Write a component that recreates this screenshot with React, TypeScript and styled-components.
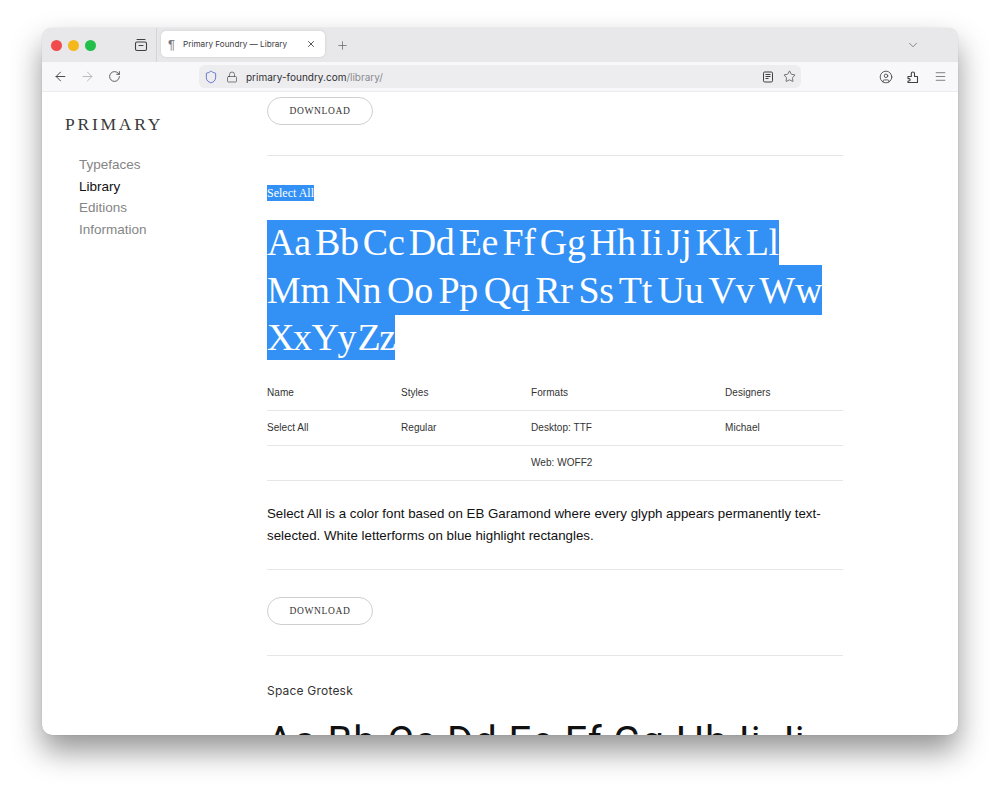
import styled, { createGlobalStyle } from "styled-components";
import { ArrowLeft, ArrowRight, ChevronDown, CircleUser, Lock, Menu, Plus, RotateCw, Shield, Star, X } from "lucide-react";

const GlobalStyle = createGlobalStyle`
  html, body {
    margin: 0;
    background: #ffffff;
  }
  body {
    font-family: "Liberation Sans", "Inter", sans-serif;
  }
`;

const Page = styled.div`
  box-sizing: border-box;
  width: 1000px;
  height: 790px;
  padding: 28px 42px 55px;
  overflow: hidden;
`;

const Window = styled.div`
  height: 100%;
  display: flex;
  flex-direction: column;
  border-radius: 10px;
  overflow: hidden;
  background: #ffffff;
  box-shadow: 0 16px 30px rgba(0, 0, 0, 0.42), 0 0 1px rgba(0, 0, 0, 0.3);
`;

const TabBar = styled.div`
  flex: none;
  height: 34px;
  display: flex;
  align-items: center;
  background: #e8e8ea;
  padding-left: 9px;
`;

const Lights = styled.div`
  display: flex;
  gap: 6px;
  width: 82px;
`;

const Light = styled.span<{ $color: string }>`
  width: 11px;
  height: 11px;
  border-radius: 50%;
  background: ${(p) => p.$color};
`;

const IconSlot = styled.span<{ $color?: string }>`
  flex: none;
  width: 16px;
  height: 16px;
  display: flex;
  align-items: center;
  justify-content: center;
  color: ${(p) => p.$color ?? "#3f3f44"};
`;

const Separator = styled.span`
  width: 1px;
  height: 34px;
  background: #d4d4d6;
  margin: 0 4px 0 7px;
`;

const Tab = styled.div`
  width: 164px;
  height: 26px;
  box-sizing: border-box;
  margin-top: -2px;
  padding: 0 9px 0 7px;
  display: flex;
  align-items: center;
  background: #ffffff;
  border-radius: 5px;
  box-shadow: 0 0 3px rgba(0, 0, 0, 0.12);
  font-family: "Inter", sans-serif;
  font-size: 8.2px;
  color: #3e3e42;
`;

const TabGlyph = styled.span`
  width: 15px;
  font-family: "Liberation Sans", sans-serif;
  font-size: 13px;
  color: #77777b;
`;

const TabTitle = styled.span`
  flex: 1;
`;

const NewTab = styled.span`
  margin-left: 11px;
  display: flex;
  color: #55555a;
`;

const TabSpacer = styled.div`
  flex: 1;
`;

const TabMenu = styled.span`
  display: flex;
  color: #66666b;
  margin-right: 38px;
`;

const Toolbar = styled.div`
  flex: none;
  height: 30px;
  box-sizing: border-box;
  display: flex;
  align-items: center;
  background: #f8f8fa;
  border-bottom: 1px solid #ececee;
  padding: 0 10px;
`;

const NavButtons = styled.div`
  display: flex;
  gap: 11px;
  width: 147px;
`;

const UrlBar = styled.div`
  width: 602px;
  height: 23px;
  box-sizing: border-box;
  display: flex;
  align-items: center;
  gap: 5px;
  padding: 0 4px;
  background: #ededf0;
  border-radius: 6px;
`;

const Url = styled.div`
  flex: 1;
  padding-left: 1px;
  font-family: "Inter", sans-serif;
  font-size: 10px;
  color: #2f2f33;
`;

const UrlPath = styled.span`
  color: #8a8a8f;
`;

const ToolbarEnd = styled.div`
  display: flex;
  gap: 11px;
  margin-left: 77px;
`;

const Body = styled.div`
  flex: 1;
  min-height: 0;
  display: flex;
  overflow: hidden;
`;

const Sidebar = styled.aside`
  flex: none;
  width: 225px;
  box-sizing: border-box;
  padding: 22px 0 0 23px;
`;

const Logo = styled.div`
  font-family: "Liberation Serif", serif;
  font-size: 17.5px;
  line-height: 20px;
  letter-spacing: 2.75px;
  color: #3a3a3a;
`;

const Nav = styled.nav`
  margin: 20px 0 0 14px;
  display: flex;
  flex-direction: column;
`;

const NavItem = styled.a<{ $active?: boolean }>`
  font-size: 13.5px;
  line-height: 21.7px;
  color: ${(p) => (p.$active ? "#111111" : "#858585")};
`;

const Main = styled.main`
  width: 576px;
  padding-top: 5px;
`;

const DownloadButton = styled.button`
  display: block;
  width: 106px;
  height: 28px;
  padding: 0;
  background: #ffffff;
  border: 1px solid #cfcfcf;
  border-radius: 14px;
  font-family: "Liberation Serif", serif;
  font-size: 9.5px;
  letter-spacing: 0.65px;
  color: #333333;
`;

const Rule = styled.hr<{ $top: number; $bottom: number }>`
  margin: ${(p) => p.$top}px 0 ${(p) => p.$bottom}px;
  border: none;
  border-top: 1px solid #e6e6e6;
`;

const SelectedName = styled.div`
  width: fit-content;
  height: 16px;
  background: #3390f5;
  color: #ffffff;
  font-family: "Liberation Serif", serif;
  font-size: 12px;
  line-height: 16px;
`;

const Specimen = styled.div`
  margin-top: 19px;
  font-family: "Liberation Serif", serif;
  font-size: 38px;
  white-space: pre;
  color: #ffffff;
`;

const SpecimenLine = styled.div<{ $height: number; $spacing: number; $word: number }>`
  width: fit-content;
  height: ${(p) => p.$height}px;
  line-height: ${(p) => p.$height}px;
  background: #3390f5;
  letter-spacing: ${(p) => p.$spacing}px;
  word-spacing: ${(p) => p.$word}px;
`;

const FontTable = styled.div`
  margin-top: 16px;
  font-size: 10px;
  letter-spacing: 0.05px;
  color: #333333;
`;

const FontRow = styled.div`
  box-sizing: border-box;
  display: grid;
  grid-template-columns: 134px 130px 194px 1fr;
  align-items: center;
  height: 35px;
  padding-bottom: 2px;
  border-bottom: 1px solid #e6e6e6;
`;

const Description = styled.p`
  margin: 22px 0 0;
  font-size: 13.3px;
  line-height: 22px;
  color: #111111;
`;

const NextName = styled.div`
  margin-top: 2px;
  font-family: "Inter", sans-serif;
  font-size: 12px;
  line-height: 16px;
  letter-spacing: 0.2px;
  color: #333333;
`;

const NextSpecimen = styled.div`
  margin-top: 20px;
  font-family: "Roboto", sans-serif;
  font-weight: 400;
  font-size: 40px;
  line-height: 46px;
  letter-spacing: 0.9px;
  white-space: pre;
  color: #111111;
`;

function ArchiveIcon() {
  return (
    <svg width="14" height="14" viewBox="0 0 14 14" fill="none" stroke="currentColor" strokeWidth="1.1">
      <rect x="1.5" y="4" width="11" height="8.5" rx="1.5" />
      <path d="M3 1.5h8M5 7.5h4" strokeLinecap="round" />
    </svg>
  );
}

function ReaderIcon() {
  return (
    <svg width="12" height="12" viewBox="0 0 12 12" fill="none" stroke="currentColor" strokeWidth="1">
      <rect x="1.5" y="1" width="9" height="10" rx="1.2" />
      <path d="M3.5 3.5h5M3.5 5.5h5M3.5 7.5h3" />
    </svg>
  );
}

function ExtensionIcon() {
  return (
    <svg width="14" height="14" viewBox="0 0 14 14" fill="none" stroke="currentColor" strokeWidth="1.1" strokeLinejoin="round">
      <path d="M2 12.5h9.5V6.5H8.5V3.6a1.6 1.6 0 0 0-3.2 0v2.9H2v2.1h1a1.2 1.2 0 0 1 0 2.4H2z" />
    </svg>
  );
}

export default function App() {
  return (
    <Page>
      <GlobalStyle />
      <Window>
        <TabBar>
          <Lights>
            <Light $color="#f04c4c" />
            <Light $color="#f5b81c" />
            <Light $color="#22c04a" />
          </Lights>
          <IconSlot>
            <ArchiveIcon />
          </IconSlot>
          <Separator />
          <Tab>
            <TabGlyph>¶</TabGlyph>
            <TabTitle>Primary Foundry — Library</TabTitle>
            <X size={10} color="#333333" />
          </Tab>
          <NewTab>
            <Plus size={13} strokeWidth={1.2} />
          </NewTab>
          <TabSpacer />
          <TabMenu>
            <ChevronDown size={14} strokeWidth={1.3} />
          </TabMenu>
        </TabBar>
        <Toolbar>
          <NavButtons>
            <IconSlot>
              <ArrowLeft size={15} strokeWidth={1.5} />
            </IconSlot>
            <IconSlot $color="#b5b5b9">
              <ArrowRight size={15} strokeWidth={1.5} />
            </IconSlot>
            <IconSlot>
              <RotateCw size={13} strokeWidth={1.5} />
            </IconSlot>
          </NavButtons>
          <UrlBar>
            <IconSlot $color="#4a5cc8">
              <Shield size={14} strokeWidth={1.4} />
            </IconSlot>
            <IconSlot>
              <Lock size={12} strokeWidth={1.3} />
            </IconSlot>
            <Url>
              primary-foundry.com<UrlPath>/library/</UrlPath>
            </Url>
            <IconSlot>
              <ReaderIcon />
            </IconSlot>
            <IconSlot>
              <Star size={13} strokeWidth={1.3} />
            </IconSlot>
          </UrlBar>
          <ToolbarEnd>
            <IconSlot>
              <CircleUser size={14} strokeWidth={1.4} />
            </IconSlot>
            <IconSlot>
              <ExtensionIcon />
            </IconSlot>
            <IconSlot>
              <Menu size={13} strokeWidth={1.2} />
            </IconSlot>
          </ToolbarEnd>
        </Toolbar>
        <Body>
          <Sidebar>
            <Logo>PRIMARY</Logo>
            <Nav>
              <NavItem>Typefaces</NavItem>
              <NavItem $active>Library</NavItem>
              <NavItem>Editions</NavItem>
              <NavItem>Information</NavItem>
            </Nav>
          </Sidebar>
          <Main>
            <DownloadButton>DOWNLOAD</DownloadButton>
            <Rule $top={30} $bottom={29} />
            <SelectedName>Select All</SelectedName>
            <Specimen>
              <SpecimenLine $height={45} $spacing={-0.3} $word={-5}>Aa Bb Cc Dd Ee Ff Gg Hh Ii Jj Kk Ll</SpecimenLine>
              <SpecimenLine $height={50} $spacing={-0.3} $word={-3.5}>Mm Nn Oo Pp Qq Rr Ss Tt Uu Vv Ww</SpecimenLine>
              <SpecimenLine $height={45} $spacing={-1.5} $word={-5.5}>Xx Yy Zz</SpecimenLine>
            </Specimen>
            <FontTable>
              <FontRow>
                <span>Name</span>
                <span>Styles</span>
                <span>Formats</span>
                <span>Designers</span>
              </FontRow>
              <FontRow>
                <span>Select All</span>
                <span>Regular</span>
                <span>Desktop: TTF</span>
                <span>Michael</span>
              </FontRow>
              <FontRow>
                <span />
                <span />
                <span>Web: WOFF2</span>
                <span />
              </FontRow>
            </FontTable>
            <Description>
              Select All is a color font based on EB Garamond where every glyph appears permanently text-selected. White
              letterforms on blue highlight rectangles.
            </Description>
            <Rule $top={22} $bottom={27} />
            <DownloadButton>DOWNLOAD</DownloadButton>
            <Rule $top={30} $bottom={27} />
            <NextName>Space Grotesk</NextName>
            <NextSpecimen>Aa Bb Cc Dd Ee Ff Gg Hh Ii Jj</NextSpecimen>
          </Main>
        </Body>
      </Window>
    </Page>
  );
}
